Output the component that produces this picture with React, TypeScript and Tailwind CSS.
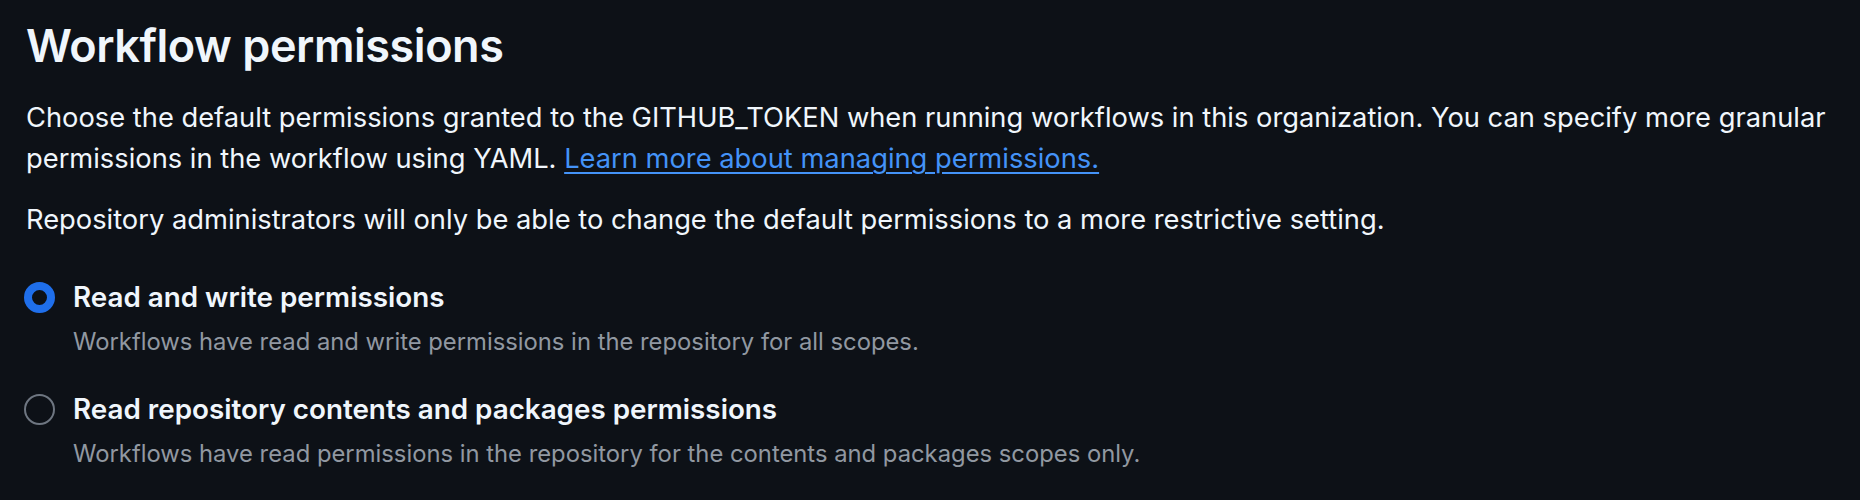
const options = [
  {
    id: "write",
    label: "Read and write permissions",
    description:
      "Workflows have read and write permissions in the repository for all scopes.",
    checked: true,
  },
  {
    id: "read",
    label: "Read repository contents and packages permissions",
    description:
      "Workflows have read permissions in the repository for the contents and packages scopes only.",
    checked: false,
  },
];

export default function App() {
  return (
    <div
      className="min-h-[500px] w-full bg-[#0d1117] px-[26px] pt-[14px] text-[#f0f6fc]"
      style={{ fontFamily: "Inter, 'Noto Sans', sans-serif" }}
    >
      <h2 className="text-[45px] font-semibold leading-[64px] tracking-[-0.01em]">
        Workflow permissions
      </h2>

      <p className="mt-[19px] text-[27.3px] leading-[41px]">
        Choose the default permissions granted to the GITHUB_TOKEN when running
        workflows in this organization. You can specify more granular
        permissions in the workflow using YAML.{" "}
        <a
          href="#"
          className="text-[#4493f8] underline decoration-[2px] underline-offset-[4px]"
        >
          Learn more about managing permissions.
        </a>
      </p>

      <p className="mt-[20px] text-[27.3px] leading-[41px]">
        Repository administrators will only be able to change the default
        permissions to a more restrictive setting.
      </p>

      <div className="mt-[38px] flex flex-col gap-[30px]">
        {options.map((option) => (
          <label key={option.id} className="flex items-start gap-[18px]">
            <span
              className={
                option.checked
                  ? "-ml-[2px] mt-[4px] size-[31px] shrink-0 rounded-full border-[8px] border-[#1f6feb] bg-[#0d1117]"
                  : "-ml-[2px] mt-[4px] size-[31px] shrink-0 rounded-full border-[2px] border-[#6e7681] bg-[#0d1117]"
              }
            />
            <span className="flex flex-col">
              <span className="text-[27.8px] font-semibold leading-[39px]">
                {option.label}
              </span>
              <span className="mt-[7px] text-[23.8px] leading-[36px] text-[#9198a1]">
                {option.description}
              </span>
            </span>
          </label>
        ))}
      </div>
    </div>
  );
}
